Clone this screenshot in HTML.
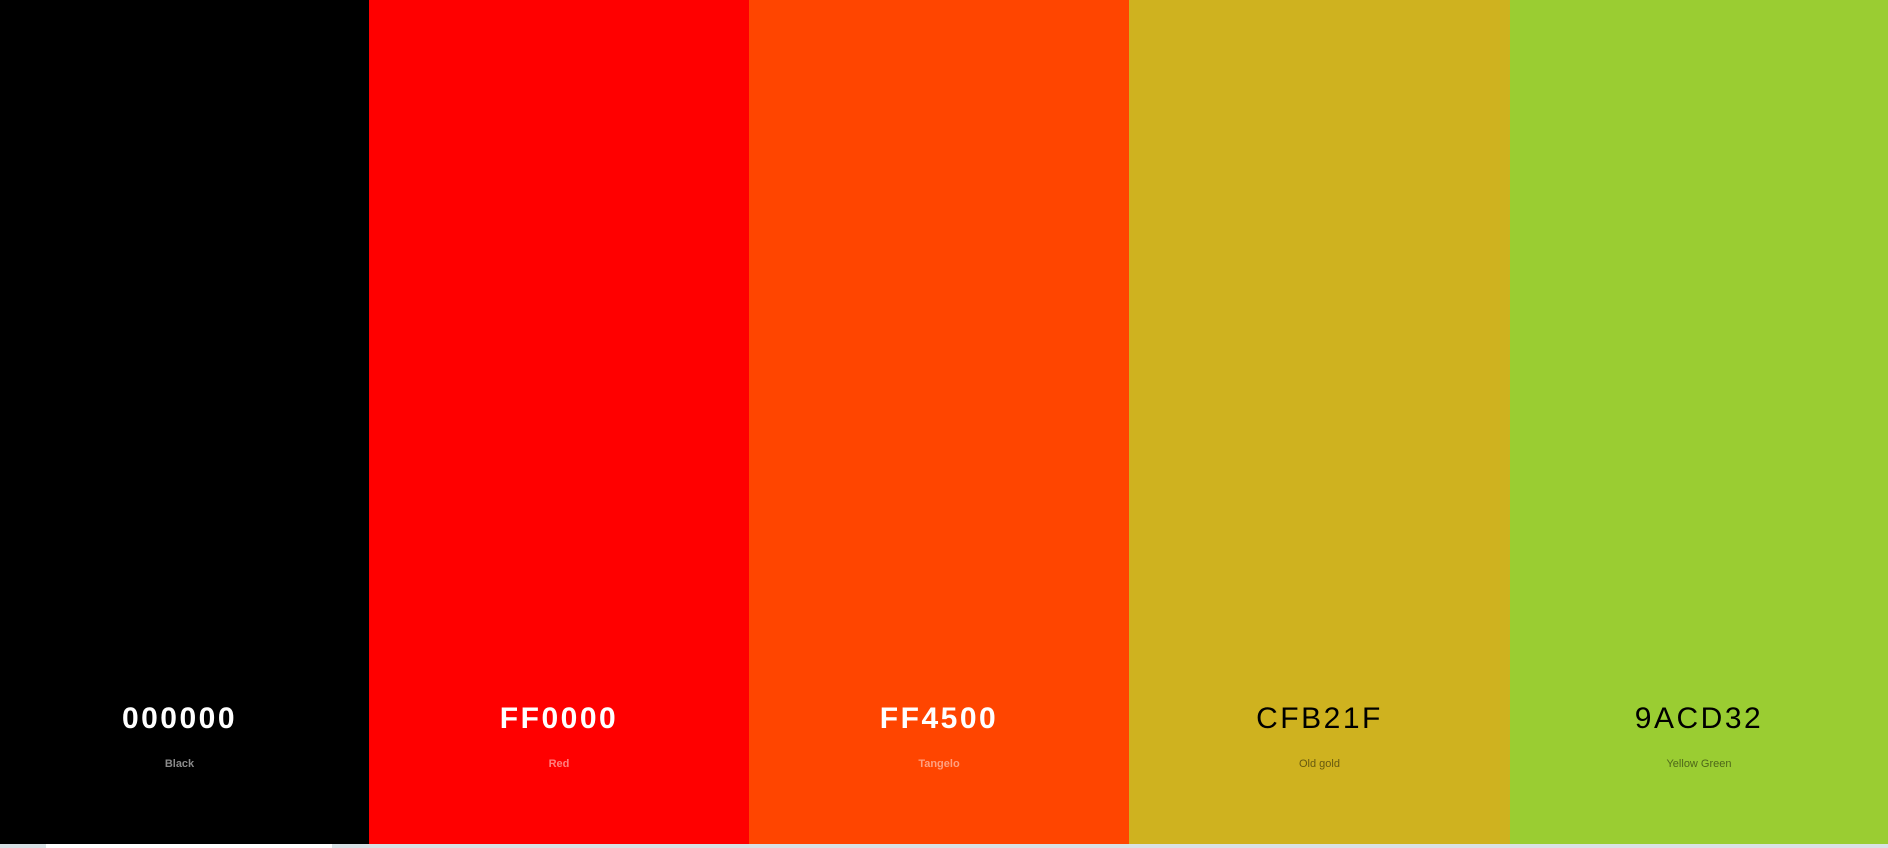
<!DOCTYPE html>
<html><head><meta charset="utf-8"><style>
html,body{margin:0;padding:0;width:1888px;height:848px;overflow:hidden;background:#d9e2e6;font-family:"Liberation Sans",sans-serif}
.c{position:absolute;top:0;height:844px}
.h{position:absolute;left:0;right:0;top:701px;text-align:center;font-size:30px;font-weight:bold;letter-spacing:2.5px;line-height:36px}
.n{position:absolute;left:0;right:0;top:757px;text-align:center;font-size:11px;font-weight:bold;line-height:14px}
.strip{position:absolute;top:844px;height:4px;background:#fff}
</style></head><body>
<div class="c" style="left:0;width:369px;background:#000"><div class="h" style="color:#fff;right:10px">000000</div><div class="n" style="color:#8a8a8a;right:10px">Black</div></div>
<div class="c" style="left:369px;width:380px;background:#f00"><div class="h" style="color:#fff">FF0000</div><div class="n" style="color:#ff8080">Red</div></div>
<div class="c" style="left:749px;width:380px;background:#ff4500"><div class="h" style="color:#fff">FF4500</div><div class="n" style="color:#ffa080">Tangelo</div></div>
<div class="c" style="left:1129px;width:381px;background:#cfb21f"><div class="h" style="color:#000;font-weight:normal">CFB21F</div><div class="n" style="color:#67590f;font-weight:normal">Old gold</div></div>
<div class="c" style="left:1510px;width:378px;background:#9acd32"><div class="h" style="color:#000;font-weight:normal">9ACD32</div><div class="n" style="color:#4d6619;font-weight:normal">Yellow Green</div></div>
<div class="strip" style="left:46px;width:286px"></div>
</body></html>
